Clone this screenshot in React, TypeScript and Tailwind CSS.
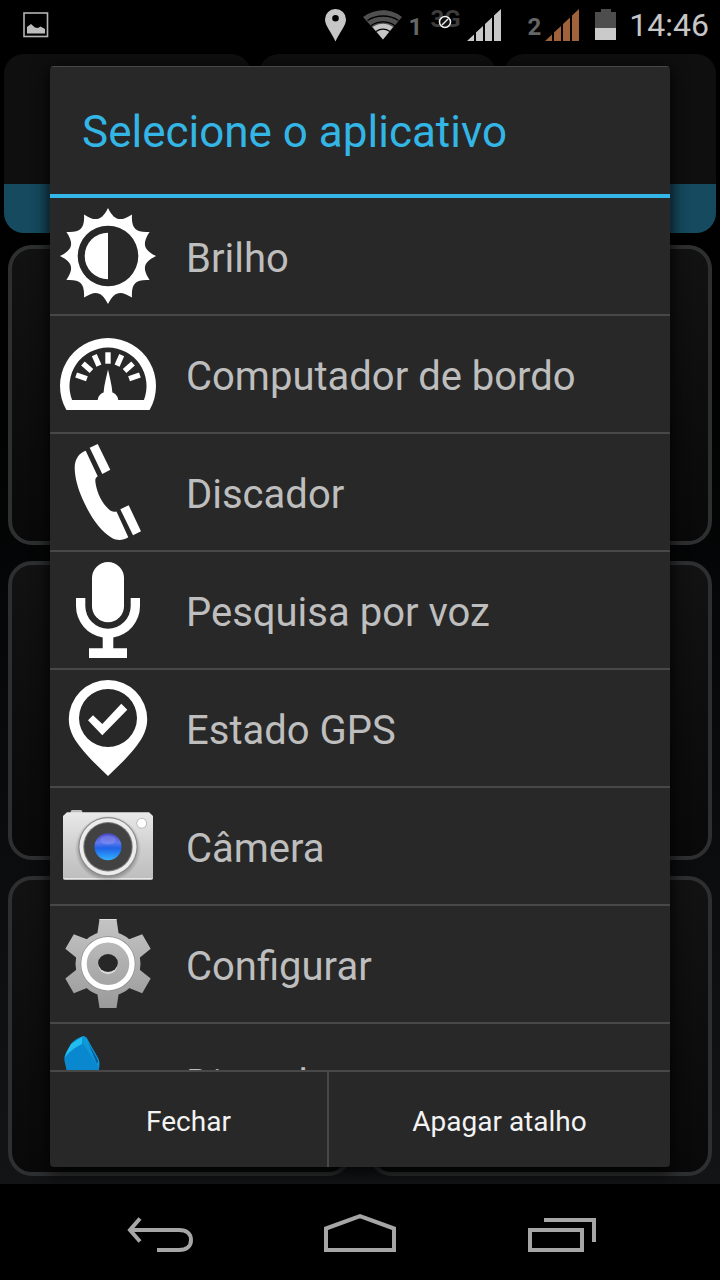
import type { ReactNode } from 'react';

interface AppEntry {
  name: string;
  icon: ReactNode;
}

const polar = (r: number, deg: number) => {
  const a = (deg * Math.PI) / 180;
  return `${(48 + r * Math.sin(a)).toFixed(2)} ${(48 - r * Math.cos(a)).toFixed(2)}`;
};

const TWELVE = Array.from({ length: 12 }, (_, i) => i * 30);
const SIX = Array.from({ length: 6 }, (_, i) => i * 60);

const sunPath =
  `M${polar(48, 0)}` +
  TWELVE.map((a) => `C${polar(36, a + 10)} ${polar(36, a + 20)} ${polar(48, a + 30)}`).join('') +
  'Z';

function BrightnessIcon() {
  return (
    <svg viewBox="0 0 96 96" className="size-24 shrink-0" fill="#fff" aria-hidden="true">
      <path fillRule="evenodd" d={`${sunPath}M48 17.7a30.3 30.3 0 1 0 0 60.6a30.3 30.3 0 1 0 0-60.6Z`} />
      <path d="M48 24.7a23.3 23.3 0 0 0 0 46.6Z" />
    </svg>
  );
}

function GaugeIcon() {
  return (
    <svg viewBox="0 0 96 96" className="size-24 shrink-0" fill="#fff" aria-hidden="true">
      <path
        fillRule="evenodd"
        d="M6.4 84A48 48 0 1 1 89.6 84ZM12.1 74H83.9A38.5 38.5 0 1 0 12.1 74Z"
      />
      {[-71, -48, -24, 0, 24, 48, 71].map((a) => (
        <rect key={a} x="45.3" y="26.3" width="5.4" height="11.4" transform={`rotate(${a} 48 60)`} />
      ))}
      <path d="M48 43.5C49.6 51 51.8 58 52.4 66.5C56 68 58.3 70.5 58.3 75H37.7C37.7 70.5 40 68 43.6 66.5C44.2 58 46.4 51 48 43.5Z" />
    </svg>
  );
}

function PhoneIcon() {
  return (
    <svg viewBox="0 0 96 96" className="size-24 shrink-0" fill="#fff" aria-hidden="true">
      <path d="M25.7 6.7L37.7 32.3C35 34 35 36 35.7 40C37.5 50 42 59 48.5 65C51 67.5 53 68 56.5 67.5L68.3 93.3C63 96.5 57.5 97 52 94C40 87 30 72 22.5 55C18 44.5 14.8 34 14.7 24C14.7 15 19 9 25.7 6.7Z" />
      <path d="M29.7 3.7L37.7 0L50.3 25.7L42.3 30Z" />
      <path d="M60.3 65.3L68.7 61.3L81 87.3L73 91.3Z" />
    </svg>
  );
}

function MicIcon() {
  return (
    <svg viewBox="0 0 96 96" className="size-24 shrink-0" fill="#fff" aria-hidden="true">
      <rect x="32" y="0" width="32" height="60.3" rx="16" />
      <path d="M16 36H25.3V44A22.7 22.7 0 0 0 70.7 44V36H80V44A32 32 0 0 1 53.3 75.5V86.3H67V96H29V86.3H42.7V75.5A32 32 0 0 1 16 44Z" />
    </svg>
  );
}

function GpsIcon() {
  return (
    <svg viewBox="0 0 96 96" className="size-24 shrink-0" fill="#fff" aria-hidden="true">
      <path
        fillRule="evenodd"
        d="M48 0A39.2 39.2 0 0 1 87.2 39.2C87.2 49 83 57.5 76.5 66C68 77 58 86.5 48 96C38 86.5 28 77 19.5 66C13 57.5 8.8 49 8.8 39.2A39.2 39.2 0 0 1 48 0ZM48 9A29 29 0 1 0 48 67A29 29 0 1 0 48 9Z"
      />
      <path d="M28 40.3L33 35.3L42.3 44L61.3 23.7L67.3 29.7L42.3 55.3Z" />
    </svg>
  );
}

function CameraIcon() {
  return (
    <svg viewBox="0 0 96 96" className="size-24 shrink-0" aria-hidden="true">
      <defs>
        <linearGradient id="cam-body" x1="0" y1="0" x2="0" y2="1">
          <stop offset="0" stopColor="#e9e9e9" />
          <stop offset="0.5" stopColor="#d0d0d0" />
          <stop offset="1" stopColor="#bdbdbd" />
        </linearGradient>
        <linearGradient id="cam-glass" x1="0" y1="0" x2="0" y2="1">
          <stop offset="0" stopColor="#4a48c4" />
          <stop offset="0.35" stopColor="#5f78ee" />
          <stop offset="0.55" stopColor="#1f62e6" />
          <stop offset="1" stopColor="#35b0ff" />
        </linearGradient>
        <radialGradient id="cam-shade">
          <stop offset="0.75" stopColor="#000" stopOpacity="0.4" />
          <stop offset="1" stopColor="#000" stopOpacity="0" />
        </radialGradient>
      </defs>
      <rect x="10.7" y="12" width="11.6" height="5" rx="1.5" fill="#bcbcbc" />
      <path d="M7 14.3H89L93 18V80a2 2 0 0 1-2 2H5a2 2 0 0 1-2-2V18Z" fill="url(#cam-body)" />
      <path d="M3.5 80.5H92.5" stroke="#e6e6e6" strokeWidth="1" />
      <circle cx="48" cy="50.5" r="33" fill="url(#cam-shade)" />
      <circle cx="48" cy="48.7" r="29.7" fill="#8d8d8d" />
      <circle cx="48" cy="48.7" r="28.5" fill="#ececec" />
      <circle cx="48" cy="48.7" r="24.7" fill="#777" />
      <circle cx="48" cy="48.7" r="23.7" fill="#424242" />
      <circle cx="48" cy="48.7" r="13.5" fill="url(#cam-glass)" />
      <ellipse cx="48" cy="42" rx="8" ry="4.5" fill="#a9a8f5" opacity="0.3" />
      <circle cx="81.7" cy="25.3" r="5.3" fill="#b0b0b0" />
      <circle cx="81.7" cy="25.3" r="4.5" fill="#fff" />
    </svg>
  );
}

function GearIcon() {
  return (
    <svg viewBox="0 0 96 96" className="size-24 shrink-0" aria-hidden="true">
      <defs>
        <linearGradient id="gear-metal" gradientUnits="userSpaceOnUse" x1="0" y1="4" x2="0" y2="92">
          <stop offset="0" stopColor="#c4c4c4" />
          <stop offset="1" stopColor="#9a9a9a" />
        </linearGradient>
        <mask id="gear-teeth">
          <circle cx="48" cy="47.7" r="32.5" fill="#fff" />
          {SIX.map((a) => (
            <path key={a} d="M39.5 3.3H56.5L59 20H37Z" fill="#fff" transform={`rotate(${a} 48 47.7)`} />
          ))}
        </mask>
      </defs>
      <rect width="96" height="96" fill="url(#gear-metal)" mask="url(#gear-teeth)" />
      <path d="M39.5 3.5H56.5" fill="none" stroke="#ddd" />
      <circle cx="48" cy="47.7" r="27.5" fill="#8f8f8f" />
      <circle cx="48" cy="47.7" r="24" fill="url(#gear-metal)" stroke="#fff" strokeWidth="5.5" />
      <circle cx="48" cy="48.5" r="9.7" fill="#dcdcdc" />
      <ellipse cx="48" cy="47" rx="9.9" ry="8.9" fill="#272727" />
    </svg>
  );
}

function GemIcon() {
  return (
    <svg viewBox="0 0 96 96" className="size-24 shrink-0" aria-hidden="true">
      <path
        d="M22.7 2.3C24.5 2 26 3 27 4.5L38.5 25C40 29 39.5 33 38.5 38L34 60H12L4.5 27C4 23 5 21 6.5 18L11 10C14 6 18.5 3.5 22.7 2.3Z"
        fill="#0a88cf"
      />
      <path d="M22.7 2.3L11 10L6.5 18L4.5 24C9 18 14 14 22 10Z" fill="#22bdef" />
      <path d="M22.7 2.3C24.5 2 26 3 27 4.5L38.5 25C39.5 28 39.5 30 38.5 33L22 8Z" fill="#0d98d8" />
      <path d="M28 8L38 26.5L37 30Z" fill="#07599a" />
    </svg>
  );
}

const apps: AppEntry[] = [
  { name: 'Brilho', icon: <BrightnessIcon /> },
  { name: 'Computador de bordo', icon: <GaugeIcon /> },
  { name: 'Discador', icon: <PhoneIcon /> },
  { name: 'Pesquisa por voz', icon: <MicIcon /> },
  { name: 'Estado GPS', icon: <GpsIcon /> },
  { name: 'Câmera', icon: <CameraIcon /> },
  { name: 'Configurar', icon: <GearIcon /> },
  { name: 'Discador', icon: <GemIcon /> },
];

function SignalBars({ color }: { color: string }) {
  return (
    <svg viewBox="0 0 34 32" width="34" height="32" fill={color} aria-hidden="true">
      <path d="M0 32L7 25.4V32ZM9 32V23.5L16 17V32ZM18 32V15L25 8.5V32ZM27 32V6.5L34 0V32Z" />
    </svg>
  );
}

function StatusBar() {
  return (
    <header className="flex h-[50px] shrink-0 items-center bg-black pl-[23px] pr-[11px] text-[#c6c6c6]">
      <svg viewBox="0 0 26 26" width="26" height="26" aria-label="Captura de tela">
        <rect x="1" y="1" width="23.5" height="23.5" fill="none" stroke="#b4b4b4" strokeWidth="1.6" />
        <path d="M4 21.5V15L8 12L12 15.5L15 16L17.5 14.5L22 17V21.5Z" fill="#bdbdbd" />
      </svg>
      <div className="ml-auto flex items-center">
        <svg viewBox="0 0 22 33" width="22" height="33" aria-label="Localização">
          <path
            fillRule="evenodd"
            fill="#c6c6c6"
            d="M10.5 0A10.4 10.4 0 0 1 21 10.5C21 17 14 24 10.5 32.5C7 24 0 17 0 10.5A10.4 10.4 0 0 1 10.5 0ZM10.5 6A3.3 3.3 0 1 0 10.5 12.6A3.3 3.3 0 1 0 10.5 6Z"
          />
        </svg>
        <svg viewBox="0 0 40 30" width="40" height="30" className="ml-4" aria-label="Wi-Fi">
          <path d="M0 7C12-2 28-2 39 7L20 29.5Z" fill="#505050" />
          <path d="M9.5 17C16 12.5 24 12.5 30 17L20 29.5Z" fill="#c6c6c6" />
          <path
            d="M4.5 10.5C13.5 4.5 26.5 4.5 35.5 10.5M8 15.7C15 10.5 25 10.5 32 15.7M13 21.5C17.5 18.5 22.5 18.5 27 21.5"
            fill="none"
            stroke="#000"
            strokeWidth="1.3"
          />
        </svg>
        <span className="ml-1.5 mt-1 text-2xl font-bold text-[#666]">1</span>
        <span className="relative mb-3 ml-2 text-2xl leading-6 font-bold text-[#3d3d3d]">
          3G
          <svg viewBox="0 0 14 14" width="14" height="14" className="absolute left-2 top-2" aria-hidden="true">
            <circle cx="7" cy="7" r="5.5" fill="#111" stroke="#eee" strokeWidth="1.5" />
            <path d="M4 10L10 4" stroke="#eee" strokeWidth="1.5" />
          </svg>
        </span>
        <span className="ml-1.5">
          <SignalBars color="#c8c8c8" />
        </span>
        <span className="ml-[27px] mt-1 text-2xl font-bold text-[#666]">2</span>
        <span className="ml-1">
          <SignalBars color="#a0623b" />
        </span>
        <svg viewBox="0 0 22 32" width="22" height="32" className="ml-4" aria-label="Bateria">
          <path d="M6 0H16V3H21V20H0V3H6Z" fill="#4d4d4d" />
          <path d="M0 19H21V31H0Z" fill="#cacaca" />
        </svg>
        <time className="ml-3 text-[32px] leading-8">14:46</time>
      </div>
    </header>
  );
}

// Launcher tiles dimmed behind the dialog
function Launcher() {
  return (
    <div className="flex min-h-0 flex-1 flex-col gap-3 bg-linear-to-b from-black via-[#060708] to-[#131416] pt-1 pb-2">
      <div className="grid h-[179px] shrink-0 grid-cols-[247fr_237fr_212fr] gap-2 px-1">
        {[0, 1, 2].map((i) => (
          <div key={i} className="flex flex-col justify-end overflow-hidden rounded-[20px] bg-[#0f0f0f]">
            <div className="h-[49px] bg-[#154a5f]" />
          </div>
        ))}
      </div>
      <div className="grid min-h-0 flex-1 grid-cols-2 grid-rows-3 gap-4 px-2">
        {[0, 1, 2, 3, 4, 5].map((i) => (
          <div
            key={i}
            className="rounded-3xl border-4 border-[#2e2f30] bg-linear-to-b from-[#121212] to-[#090909]"
          />
        ))}
      </div>
    </div>
  );
}

function AppDialog() {
  return (
    <section
      role="dialog"
      aria-labelledby="dialog-title"
      className="flex h-full flex-col overflow-hidden rounded-[4px] bg-[#282828] shadow-[0_4px_16px_2px_rgba(0,0,0,0.8)]"
    >
      <h1
        id="dialog-title"
        className="flex h-32 shrink-0 items-center border-t border-[#484848] px-8 pt-0.5 text-[44px] text-[#33b5e5]"
      >
        Selecione o aplicativo
      </h1>
      <ul className="min-h-0 flex-1 overflow-hidden border-t-4 border-[#33b5e5]">
        {apps.map((app, i) => (
          <li key={i} className="border-b-2 border-[#484848]">
            <button className="flex h-[116px] w-full items-center gap-7 pl-2.5 text-left text-[40px] text-[#bebebe]">
              {app.icon}
              <span className="pt-1.5 pl-0.5">{app.name}</span>
            </button>
          </li>
        ))}
      </ul>
      <div className="grid h-[97px] shrink-0 grid-cols-[277fr_343fr] border-t-2 border-[#484848] text-[28px] text-[#f3f3f3]">
        <button className="pt-1">Fechar</button>
        <button className="border-l-2 border-[#484848] pt-1">Apagar atalho</button>
      </div>
    </section>
  );
}

function NavBar() {
  return (
    <nav className="flex h-24 shrink-0 bg-black px-[60px]">
      <button aria-label="Voltar" className="flex flex-1 items-center justify-center">
        <svg viewBox="0 0 80 40" width="80" height="40" fill="none" stroke="#a6a6a6" strokeWidth="4">
          <path d="M20 6.5L10 18L20 29.5M10 18H59C67 18 71 22 71 28S67 38 59 38H37" />
        </svg>
      </button>
      <button aria-label="Início" className="flex flex-1 items-center justify-center">
        <svg viewBox="0 0 80 40" width="80" height="40" fill="none" stroke="#a6a6a6" strokeWidth="4">
          <path d="M6 38V16.5L40 4.2L74 16.5V38Z" />
        </svg>
      </button>
      <button aria-label="Recentes" className="flex flex-1 items-center justify-center">
        <svg viewBox="0 0 80 40" width="80" height="40" fill="none" stroke="#a6a6a6" strokeWidth="4">
          <path d="M10 18H62V38H10ZM24 8H74V30" />
        </svg>
      </button>
    </nav>
  );
}

export default function App() {
  return (
    <div className="relative flex h-screen flex-col overflow-hidden bg-black font-['Roboto','Liberation_Sans',sans-serif]">
      <StatusBar />
      <Launcher />
      <NavBar />
      <div className="absolute inset-0 px-[50px] pt-[66px] pb-[113px]">
        <AppDialog />
      </div>
    </div>
  );
}
